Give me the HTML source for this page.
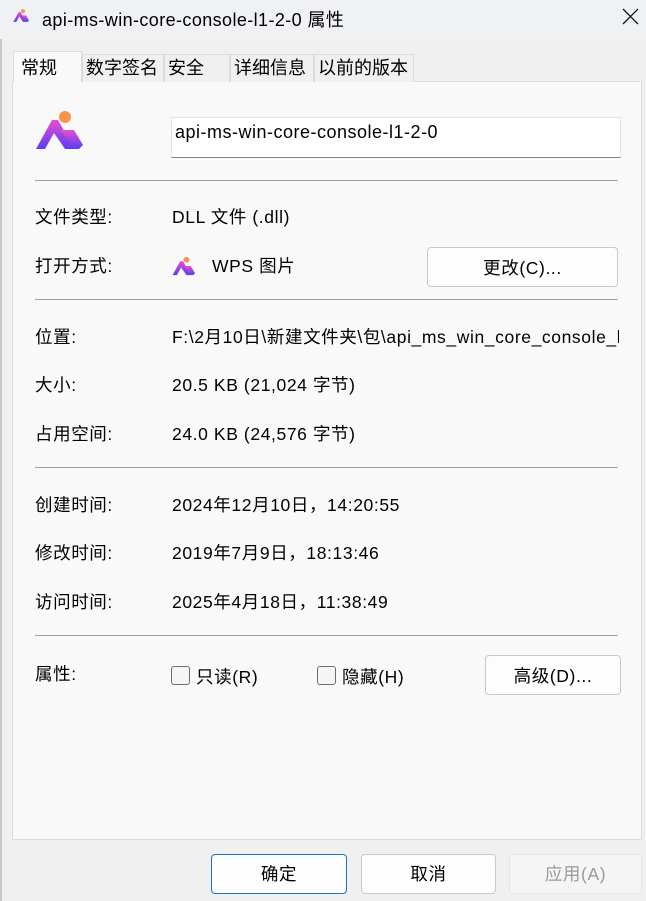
<!DOCTYPE html>
<html><head><meta charset="utf-8"><style>
*{box-sizing:border-box;margin:0;padding:0}
body{width:646px;height:901px;background:#f0f0f0;font-family:"Liberation Sans","Noto Sans CJK SC",sans-serif;font-size:17.5px;letter-spacing:0.6px;color:#000;position:relative;overflow:hidden}
.abs{position:absolute}
.title{left:0;top:0;width:646px;height:39px;background:#eff1f4}
.edge{left:0;top:39px;width:2px;height:862px;background:#c8c8c8}
.panel{left:12px;top:81px;width:630px;height:759px;background:#f9f9f9;border:1px solid #dcdcdc}
.tab{top:54px;height:28px;background:#f0f0f0;border:1px solid #dcdcdc;border-bottom:none;font-size:18px;letter-spacing:0;line-height:27px;padding-left:3px;white-space:nowrap}
.tab.sel{top:51px;height:31px;background:#f9f9f9;padding-left:7px;line-height:32px;z-index:2}
.hr{left:35px;width:583px;height:1px;background:#a0a0a0}
.lbl{left:35px}
.val{left:172px}
.btn{background:#fdfdfd;border:1px solid #c9c9c9;border-radius:4px;text-align:center}
.cb{width:19px;height:19px;border:1px solid #6e6e6e;border-radius:3px;background:#f5f5f5}
</style></head><body>
<div class="abs title"></div>
<div class="abs edge"></div>
<svg class="abs" style="left:12px;top:7px" width="20" height="17" viewBox="0 0 60 50"><defs><linearGradient id="g1" x1="0" y1="0" x2="0" y2="1"><stop offset="0" stop-color="#e64fd0"/><stop offset="1" stop-color="#5b3cf5"/></linearGradient></defs><circle cx="33" cy="12" r="6" fill="#f7934c"/><path d="M4 44 L20 15 L26 15 L40 40 L33 44 L22 28 L13 44Z" fill="url(#g1)"/><path d="M28 25 L42 25 L51 40 L47 44 L33 44 L38 37Z" fill="url(#g1)"/></svg>
<div class="abs" style="left:42px;top:6px;font-size:18px;letter-spacing:0.4px">api-ms-win-core-console-l1-2-0 属性</div>
<svg class="abs" style="left:622px;top:8px" width="17" height="17" viewBox="0 0 17 17"><path d="M1 1L16 16M16 1L1 16" stroke="#111" stroke-width="1.3"/></svg>

<div class="abs panel"></div>
<div class="abs tab sel" style="left:13px;width:69px">常规</div>
<div class="abs tab" style="left:82px;width:82px">数字签名</div>
<div class="abs tab" style="left:164px;width:66px">安全</div>
<div class="abs tab" style="left:230px;width:84px">详细信息</div>
<div class="abs tab" style="left:314px;width:100px">以前的版本</div>

<svg class="abs" style="left:32px;top:105px" width="60" height="50" viewBox="0 0 60 50"><defs><linearGradient id="g2" x1="0" y1="0" x2="0" y2="1"><stop offset="0" stop-color="#e64fd0"/><stop offset="1" stop-color="#5b3cf5"/></linearGradient></defs><circle cx="33" cy="12" r="6" fill="#f7934c"/><path d="M4 44 L20 15 L26 15 L40 40 L33 44 L22 28 L13 44Z" fill="url(#g2)"/><path d="M28 25 L42 25 L51 40 L47 44 L33 44 L38 37Z" fill="url(#g2)"/></svg>
<div class="abs" style="left:171px;top:117px;width:450px;height:41px;background:#fff;border:1px solid #e3e3e3;border-bottom:1px solid #868686;padding:4px 0 0 3px;font-size:18px;letter-spacing:0.5px">api-ms-win-core-console-l1-2-0</div>
<div class="abs hr" style="top:180px"></div>

<div class="abs lbl" style="top:204px">文件类型:</div><div class="abs val" style="top:204px">DLL 文件 (.dll)</div>
<div class="abs lbl" style="top:253px">打开方式:</div>
<svg class="abs" style="left:170px;top:254px" width="30" height="24" viewBox="0 0 60 50"><defs><linearGradient id="g3" x1="0" y1="0" x2="0" y2="1"><stop offset="0" stop-color="#e64fd0"/><stop offset="1" stop-color="#5b3cf5"/></linearGradient></defs><circle cx="33" cy="12" r="6" fill="#f7934c"/><path d="M4 44 L20 15 L26 15 L40 40 L33 44 L22 28 L13 44Z" fill="url(#g3)"/><path d="M28 25 L42 25 L51 40 L47 44 L33 44 L38 37Z" fill="url(#g3)"/></svg>
<div class="abs" style="left:212px;top:253px">WPS 图片</div>
<div class="abs btn" style="left:427px;top:247px;width:191px;height:40px;line-height:40px">更改(C)...</div>
<div class="abs hr" style="top:299px"></div>

<div class="abs lbl" style="top:324px">位置:</div><div class="abs val" style="top:324px;white-space:nowrap;width:447px;overflow:hidden">F:\2月10日\新建文件夹\包\api_ms_win_core_console_l</div>
<div class="abs lbl" style="top:372px">大小:</div><div class="abs val" style="top:372px">20.5 KB (21,024 字节)</div>
<div class="abs lbl" style="top:421px">占用空间:</div><div class="abs val" style="top:421px">24.0 KB (24,576 字节)</div>
<div class="abs hr" style="top:467px"></div>

<div class="abs lbl" style="top:492px">创建时间:</div><div class="abs val" style="top:492px">2024年12月10日，14:20:55</div>
<div class="abs lbl" style="top:540px">修改时间:</div><div class="abs val" style="top:540px">2019年7月9日，18:13:46</div>
<div class="abs lbl" style="top:589px">访问时间:</div><div class="abs val" style="top:589px">2025年4月18日，11:38:49</div>
<div class="abs hr" style="top:635px"></div>

<div class="abs lbl" style="top:661px">属性:</div>
<div class="abs cb" style="left:171px;top:666px"></div><div class="abs" style="left:196px;top:664px">只读(R)</div>
<div class="abs cb" style="left:317px;top:666px"></div><div class="abs" style="left:342px;top:664px">隐藏(H)</div>
<div class="abs btn" style="left:485px;top:655px;width:136px;height:40px;line-height:40px">高级(D)...</div>

<div class="abs btn" style="left:211px;top:854px;width:136px;height:40px;line-height:38px;border:1px solid #1a73c7">确定</div>
<div class="abs btn" style="left:361px;top:854px;width:135px;height:40px;line-height:38px">取消</div>
<div class="abs btn" style="left:509px;top:854px;width:133px;height:40px;line-height:38px;background:#f5f5f5;border-color:#e5e5e5;color:#9a9a9a">应用(A)</div>
</body></html>
